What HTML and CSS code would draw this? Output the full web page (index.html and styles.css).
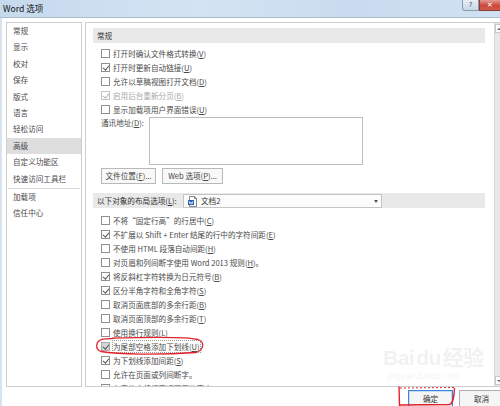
FILE: index.html
```html
<!DOCTYPE html>
<html lang="zh-CN">
<head>
<meta charset="utf-8">
<title>Word 选项</title>
<link rel="stylesheet" href="styles.css">
</head>
<body>
<div class="window">
  <div class="titlebar">
    <span class="title">Word 选项</span>
    <div class="tb-buttons">
      <span class="tb-help">?</span>
      <span class="tb-close">✕</span>
    </div>
  </div>
  <div class="body">
    <nav class="nav">
      <div class="nav-item">常规</div>
      <div class="nav-item">显示</div>
      <div class="nav-item">校对</div>
      <div class="nav-item">保存</div>
      <div class="nav-item">版式</div>
      <div class="nav-item">语言</div>
      <div class="nav-item">轻松访问</div>
      <div class="nav-item active">高级</div>
      <div class="nav-item">自定义功能区</div>
      <div class="nav-item">快速访问工具栏</div>
      <div class="nav-sep"></div>
      <div class="nav-item">加载项</div>
      <div class="nav-item">信任中心</div>
    </nav>
    <div class="panel">
      <div class="content">
        <div class="section-head">常规</div>
        <div class="rows first">
          <div class="row"><span class="cb"></span><span>打开时确认文件格式转换(<u>V</u>)</span></div>
          <div class="row"><span class="cb on"></span><span>打开时更新自动链接(<u>U</u>)</span></div>
          <div class="row"><span class="cb"></span><span>允许以草稿视图打开文档(<u>D</u>)</span></div>
          <div class="row disabled"><span class="cb on"></span><span>启用后台重新分页(<u>B</u>)</span></div>
          <div class="row"><span class="cb"></span><span>显示加载项用户界面错误(<u>U</u>)</span></div>
        </div>
        <div class="address">
          <span class="address-label">通讯地址(<u>D</u>):</span>
          <div class="textarea"></div>
        </div>
        <div class="btn-row">
          <span class="btn w1">文件位置(<u>F</u>)...</span>
          <span class="btn w2">Web 选项(<u>P</u>)...</span>
        </div>
        <div class="section-head layout">
          <span class="layout-label">以下对象的布局选项(<u>L</u>):</span>
          <div class="dropdown">
            <svg class="doc-icon" width="10" height="11" viewBox="0 0 10 11">
              <path d="M1.5 0.5 H6.5 L8.5 2.5 V10.5 H1.5 Z" fill="#fff" stroke="#7d8590" stroke-width="1"/>
              <path d="M6.5 0.5 V2.5 H8.5" fill="none" stroke="#7d8590" stroke-width="1"/>
              <rect x="0" y="4" width="6" height="5" fill="#2b5fb3"/>
              <path d="M1 5 L2 8 L3 6 L4 8 L5 5" fill="none" stroke="#fff" stroke-width="0.7"/>
            </svg>
            <span class="dd-text">文档2</span>
            <span class="dd-arrow"></span>
          </div>
        </div>
        <div class="rows second">
          <div class="row"><span class="cb"></span><span>不将“固定行高”的行居中(<u>C</u>)</span></div>
          <div class="row"><span class="cb on"></span><span>不扩展以 Shift + Enter 结尾的行中的字符间距(<u>E</u>)</span></div>
          <div class="row"><span class="cb"></span><span>不使用 HTML 段落自动间距(<u>H</u>)</span></div>
          <div class="row"><span class="cb"></span><span>对页眉和列间断字使用 Word 2013 规则(<u>H</u>)。</span></div>
          <div class="row"><span class="cb on"></span><span>将反斜杠字符转换为日元符号(<u>B</u>)</span></div>
          <div class="row"><span class="cb on"></span><span>区分半角字符和全角字符(<u>S</u>)</span></div>
          <div class="row"><span class="cb"></span><span>取消页面底部的多余行距(<u>B</u>)</span></div>
          <div class="row"><span class="cb"></span><span>取消页面顶部的多余行距(<u>T</u>)</span></div>
          <div class="row"><span class="cb"></span><span>使用换行规则(<u>L</u>)</span></div>
          <div class="row"><span class="cb on grey"></span><span class="focus">为尾部空格添加下划线(<u>U</u>)</span></div>
          <div class="row"><span class="cb on"></span><span>为下划线添加间距(<u>S</u>)</span></div>
          <div class="row"><span class="cb"></span><span>允许在页面或列间断字。</span></div>
          <div class="row"><span class="cb on"></span><span>在表格中将行高调至网格高度(<u>L</u>)</span></div>
        </div>
      </div>
      <div class="scrollbar">
        <span class="sb-arrow up"></span>
        <span class="sb-arrow down"></span>
      </div>
    </div>
  </div>
  <div class="footer">
    <span class="fbtn ok">确定</span>
    <span class="fbtn">取消</span>
  </div>
  <div class="watermark">
    <span class="wm-main">Bai<span class="wm-du">du</span>经验</span>
    <span class="wm-sub">jingyan.baidu.com</span>
  </div>
  <svg class="marks" width="500" height="406" viewBox="0 0 500 406">
    <path d="M112 338.2 C150 337, 188 337, 198 339.5 C205 342, 204 350, 196 352.5 C160 355, 118 354.5, 101 351.5 C95 349.5, 95 341, 103 339.2 L114 338.4" fill="none" stroke="#e3212b" stroke-width="1.3"/>
    <path d="M399 386.5 L399.5 406" fill="none" stroke="#e3212b" stroke-width="1.4"/>
    <path d="M399.5 405 L449 404.5 C453 404, 454 398, 454.5 388" fill="none" stroke="#e3212b" stroke-width="1.4"/>
    <path d="M400 388 L455 387.5" fill="none" stroke="#e3212b" stroke-width="1" stroke-dasharray="2 2"/>
  </svg>
</div>
</body>
</html>
```

FILE: styles.css
```css
* { box-sizing: border-box; }

html, body {
  margin: 0;
  padding: 0;
}

body {
  width: 500px;
  height: 406px;
  overflow: hidden;
  background: #ffffff;
  font-family: "Noto Sans CJK SC", "Noto Sans", sans-serif;
  font-size: 7.6px;
  color: #4a4a4a;
}

u { text-decoration: underline; text-underline-offset: 1px; }

.window {
  position: relative;
  width: 500px;
  height: 406px;
  display: flex;
  flex-direction: column;
  background: #fff;
  border-left: 2px solid #d7e3ef;
}

.titlebar {
  height: 18px;
  flex: none;
  display: flex;
  align-items: flex-start;
  justify-content: space-between;
  background: linear-gradient(90deg, #c6daee 0%, #d3e3f3 40%, #c9dcef 70%, #cfe1f3 100%);
  border-bottom: 1px solid #a9bbcd;
  margin-left: -2px;
}

.title {
  font-size: 8.6px;
  color: #111;
  line-height: 16px;
  padding-left: 3px;
}

.tb-buttons {
  display: flex;
  height: 11px;
}

.tb-help {
  width: 17px;
  height: 11px;
  border: 1px solid #8a9bab;
  border-top: none;
  border-radius: 0 0 0 3px;
  background: linear-gradient(#e7eef6, #c9d7e6);
  color: #3c4a58;
  font-size: 7px;
  line-height: 10px;
  text-align: center;
  font-family: "DejaVu Sans", sans-serif;
}

.tb-close {
  width: 21px;
  height: 11px;
  background: linear-gradient(#e49a90, #c9473b 55%, #d25c4c);
  border: 1px solid #8f3b35;
  border-top: none;
  border-right: none;
  color: #fff;
  font-size: 7px;
  line-height: 10px;
  text-align: center;
  font-weight: bold;
  font-family: "DejaVu Sans", sans-serif;
}

.body {
  display: flex;
  height: 369px;
  padding-top: 4px;
  flex: none;
}

.nav {
  width: 76px;
  height: 365px;
  margin-left: 4px;
  border: 1px solid #cdcdcd;
  flex: none;
}

.nav-item {
  height: 16.4px;
  line-height: 16.4px;
  padding-left: 6px;
  color: #4a4a4a;
  white-space: nowrap;
}

.nav-item.active {
  background: #dedede;
}

.nav-sep {
  height: 1px;
  margin: 1px 1px 0;
  background: #d7d7d7;
}

.panel {
  flex: 1;
  height: 365px;
  margin-left: 3px;
  border-left: 1px solid #cdcdcd;
  border-top: 1px solid #cdcdcd;
  border-bottom: 1px solid #cdcdcd;
  display: flex;
  overflow: hidden;
}

.content {
  flex: 1;
  padding: 5px 9px 0 7px;
  overflow: hidden;
}

.section-head {
  height: 15px;
  line-height: 15px;
  background: #e9e9e9;
  padding-left: 4px;
  color: #333;
}

.rows.first { margin-top: 3px; }
.rows.second { margin-top: 5px; }

.row {
  height: 14px;
  display: flex;
  align-items: center;
  padding-left: 8px;
  white-space: nowrap;
}

.cb {
  position: relative;
  width: 9px;
  height: 9px;
  flex: none;
  border: 1px solid #8f8f8f;
  background: #fff;
  margin-right: 3px;
}

.cb.on::after {
  content: "";
  position: absolute;
  left: 2.2px;
  top: 0.3px;
  width: 2.6px;
  height: 5px;
  border: solid #555;
  border-width: 0 1px 1px 0;
  transform: rotate(40deg);
}

.cb.grey {
  background: #d6d6d6;
  border-color: #a9a9a9;
}

.row.disabled { color: #a8a8a8; }
.row.disabled .cb { border-color: #c4c4c4; }
.row.disabled .cb.on::after { border-color: #b3b3b3; }

.focus {
  outline: 1px dotted #9a9a9a;
  outline-offset: 0;
}

.address {
  display: flex;
  align-items: flex-start;
  margin-top: 1px;
  padding-left: 8px;
}

.address-label {
  width: 48px;
  line-height: 12px;
  flex: none;
}

.textarea {
  width: 214px;
  height: 48px;
  border: 1px solid #bdbdbd;
  background: #fff;
}

.btn-row {
  display: flex;
  gap: 6px;
  margin-top: 3px;
  padding-left: 8px;
}

.btn {
  height: 16px;
  line-height: 14px;
  border: 1px solid #b9b9b9;
  background: #f8f8f8;
  text-align: center;
  color: #444;
}

.btn.w1 { width: 55px; }
.btn.w2 { width: 61px; }

.section-head.layout {
  margin-top: 9px;
  display: flex;
  align-items: center;
}

.layout-label {
  width: 86px;
  flex: none;
}

.dropdown {
  width: 199px;
  height: 14px;
  margin-top: 1px;
  border: 1px solid #c5c5c5;
  background: #fcfcfc;
  display: flex;
  align-items: center;
  position: relative;
  padding-left: 4px;
}

.doc-icon { flex: none; }

.dd-text {
  margin-left: 3px;
  line-height: 12px;
  color: #333;
}

.dd-arrow {
  margin-left: auto;
  margin-right: 3px;
  width: 0;
  height: 0;
  border-left: 2.5px solid transparent;
  border-right: 2.5px solid transparent;
  border-top: 3px solid #555;
}

.scrollbar {
  width: 6px;
  flex: none;
  background: #e8e8e8;
  border-left: 1px solid #d6d6d6;
  display: flex;
  flex-direction: column;
  justify-content: space-between;
  padding: 1px 0 1px;
}

.sb-arrow {
  height: 9px;
  background: #fff;
  border: 1px solid #c8c8c8;
  border-right: none;
  position: relative;
}

.sb-arrow::after {
  content: "";
  position: absolute;
  left: 1px;
  top: 3px;
  border-left: 2px solid transparent;
  border-right: 2px solid transparent;
}

.sb-arrow.up::after { border-bottom: 2px solid #666; }
.sb-arrow.down::after { border-top: 2px solid #666; }

.footer {
  flex: 1;
  display: flex;
  align-items: flex-start;
  gap: 6px;
  padding-left: 406px;
  padding-top: 3px;
}

.fbtn {
  width: 45px;
  height: 18px;
  flex: none;
  border: 1px solid #adadad;
  background: #f5f5f5;
  text-align: center;
  line-height: 15px;
  color: #333;
}

.fbtn.ok {
  border-color: #3b86d6;
  box-shadow: inset 0 0 0 1px #c4dcf5;
}

.watermark {
  position: absolute;
  left: 381px;
  top: 345px;
  display: flex;
  flex-direction: column;
  align-items: flex-start;
  color: rgba(170, 170, 170, 0.16);
  pointer-events: none;
  font-family: "Liberation Sans", "Noto Sans CJK SC", sans-serif;
}

.wm-main {
  font-size: 21px;
  font-weight: bold;
  line-height: 26px;
  letter-spacing: -0.5px;
}

.wm-du {
  margin: 0 2px;
}

.wm-sub {
  font-size: 9px;
  line-height: 10px;
  margin-left: 4px;
}

.marks {
  position: absolute;
  left: -2px;
  top: 0;
  pointer-events: none;
}
```
